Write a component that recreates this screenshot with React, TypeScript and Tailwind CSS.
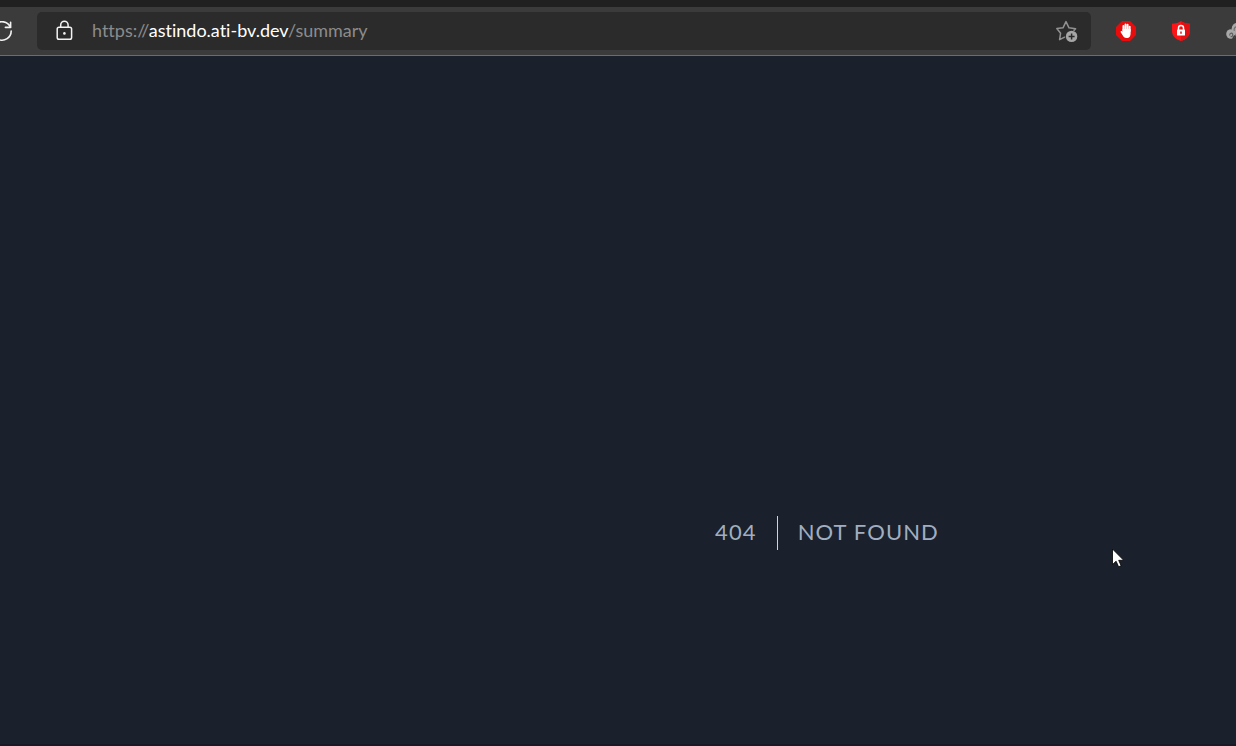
import React from "react";

function ReloadIcon() {
  return (
    <svg className="block h-6 w-6" viewBox="0 0 24 24" fill="none" stroke="#f2f2f2" strokeWidth="1.6" strokeLinecap="round" strokeLinejoin="round" aria-hidden="true">
      <path d="M20.4 8.2A9.2 9.2 0 1 0 21.2 12" />
      <path d="M20.6 3.2V8.4H15.4" />
    </svg>
  );
}

function LockIcon() {
  return (
    <svg className="block h-6 w-6" viewBox="0 0 24 24" fill="none" stroke="#f2f2f2" strokeWidth="1.5" strokeLinejoin="round" aria-hidden="true">
      <rect x="5.2" y="8.3" width="14.4" height="12" rx="1.8" />
      <path d="M8.700 8V6a3.700 3.800 0 0 1 7.400 0v2" />
      <circle cx="12.400" cy="14.400" r="1.300" fill="#f2f2f2" stroke="none" />
    </svg>
  );
}

function FavoriteIcon() {
  return (
    <svg className="block h-6 w-6" viewBox="0 0 24 24" fill="none" aria-hidden="true">
      <path d="M9.600 18.200 L4.600 20.700 L5.600 14.200 L1.800 9.600 L8 8.800 L11 2.600 L14 8.800 L20.600 9.800 L19 11.400" stroke="#919191" strokeWidth="1.500" strokeLinejoin="round" strokeLinecap="round" />
      <circle cx="16.600" cy="17.400" r="5.700" fill="#a6a6a6" />
      <path d="M16.600 14.400v6M13.600 17.400h6" stroke="#2b2b2b" strokeWidth="1.500" />
    </svg>
  );
}

function BlockerIcon() {
  return (
    <svg className="block h-5 w-5" viewBox="0 0 20 20" aria-hidden="true">
      <path d="M6 0h8l6 6v8l-6 6H6l-6-6V6z" fill="#e80c0c" />
      <path d="M7.400 10V5M9.500 9.600V3.400M11.600 9.600V3.800M13.700 10V5.600" stroke="#fff" strokeWidth="1.900" strokeLinecap="round" />
      <path d="M6.500 8h8.100v4.600c0 2.200-.9 4.100-2.900 4.400-2.700.5-4.200-.7-5.200-2.900L4.700 11.200c-.4-.9.800-1.500 1.400-.8l.4.500z" fill="#fff" />
    </svg>
  );
}

function ShieldIcon() {
  return (
    <svg className="block h-5 w-5" viewBox="0 0 20 20" aria-hidden="true">
      <path d="M10 0c2.400 1.900 5.300 2.700 9 2.700V10c0 5-3.800 8.300-9 10-5.200-1.700-9-5-9-10V2.700C4.700 2.700 7.600 1.900 10 0z" fill="#fb1418" />
      <path d="M10 0c2.400 1.900 5.300 2.700 9 2.700V10c0 5-3.800 8.300-9 10z" fill="#e31013" />
      <path d="M7.500 9V7a2.500 2.500 0 0 1 5 0v2" fill="none" stroke="#fff" strokeWidth="1.500" />
      <rect x="6" y="8.600" width="8" height="6" rx=".6" fill="#fff" />
      <path d="M10 10.400v2.400" stroke="#d9171a" strokeWidth="1.500" />
    </svg>
  );
}

function CurlIcon() {
  return (
    <svg className="block h-5 w-5" viewBox="0 0 20 20" fill="none" strokeLinecap="round" aria-hidden="true">
      <circle cx="5" cy="13" r="4.800" fill="#a8a8a8" />
      <circle cx="11.500" cy="7.500" r="5.800" fill="#a8a8a8" />
      <path d="M3.800 14.200c-.4-2 2-2.800 2.800-1.200.6 1.400-.4 2.600-1.600 2.800" stroke="#5c5c5c" strokeWidth="1.100" />
      <path d="M8.200 9.500c-.6-3 2-4.500 4-3.400" stroke="#6c6c6c" strokeWidth="1.100" />
      <path d="M7 17.500l1.500-2.500" stroke="#3b3b3b" strokeWidth="1.500" />
    </svg>
  );
}

function Pointer() {
  return (
    <svg className="absolute top-[548px] left-[1112px] h-5 w-3" viewBox="0 0 12 20" aria-hidden="true">
      <path d="M.5 1v15.500l3.600-3.300 2.500 5.600 2.500-1.100-2.400-5.400h5z" fill="#fff" stroke="#000" strokeWidth=".8" />
    </svg>
  );
}

export default function App() {
  return (
    <div className="relative flex min-h-screen flex-col overflow-hidden border-b-2 border-[#191827] bg-[#1a202c]">
      <header className="border-b border-[#6c6c6c] bg-[#3b3b3b]">
        <div className="h-[7px] bg-[#202020]" />
        <div className="flex h-12 items-center">
          <button type="button" aria-label="Reload" className="-ml-2.5 w-6 shrink-0">
            <ReloadIcon />
          </button>
          <div className="ml-[23px] flex h-[38px] min-w-0 flex-1 items-center rounded-[5px] bg-[#2b2b2b] pr-3 pl-[15px]">
            <button type="button" aria-label="Site information" className="shrink-0">
              <LockIcon />
            </button>
            <div
              role="textbox"
              aria-label="Address"
              contentEditable
              suppressContentEditableWarning
              spellCheck={false}
              className="ml-4 min-w-0 flex-1 overflow-hidden pb-0.5 font-['Lato',sans-serif] text-[18px] leading-6 whitespace-nowrap text-[#8b8b8b] outline-none [font-variant-ligatures:none]"
            >
              https://<span className="text-white">astindo.ati-bv.dev</span>/summary
            </div>
            <button type="button" aria-label="Add this page to favorites" className="shrink-0">
              <FavoriteIcon />
            </button>
          </div>
          <div className="-mr-2.5 ml-[25px] flex shrink-0 gap-[35px]">
            <button type="button" aria-label="Content blocker">
              <BlockerIcon />
            </button>
            <button type="button" aria-label="Security shield">
              <ShieldIcon />
            </button>
            <button type="button" aria-label="Extension">
              <CurlIcon />
            </button>
          </div>
        </div>
      </header>
      <main className="flex flex-1 items-center justify-center pt-[266px] pl-[418px] font-['Lato',sans-serif] text-[22px] leading-8 tracking-wider text-[#a0aec0]">
        <div className="border-r border-[#cbd5e0] px-5 pb-0.5">404</div>
        <h1 className="px-5 pb-0.5 uppercase">Not Found</h1>
      </main>
      <Pointer />
    </div>
  );
}
